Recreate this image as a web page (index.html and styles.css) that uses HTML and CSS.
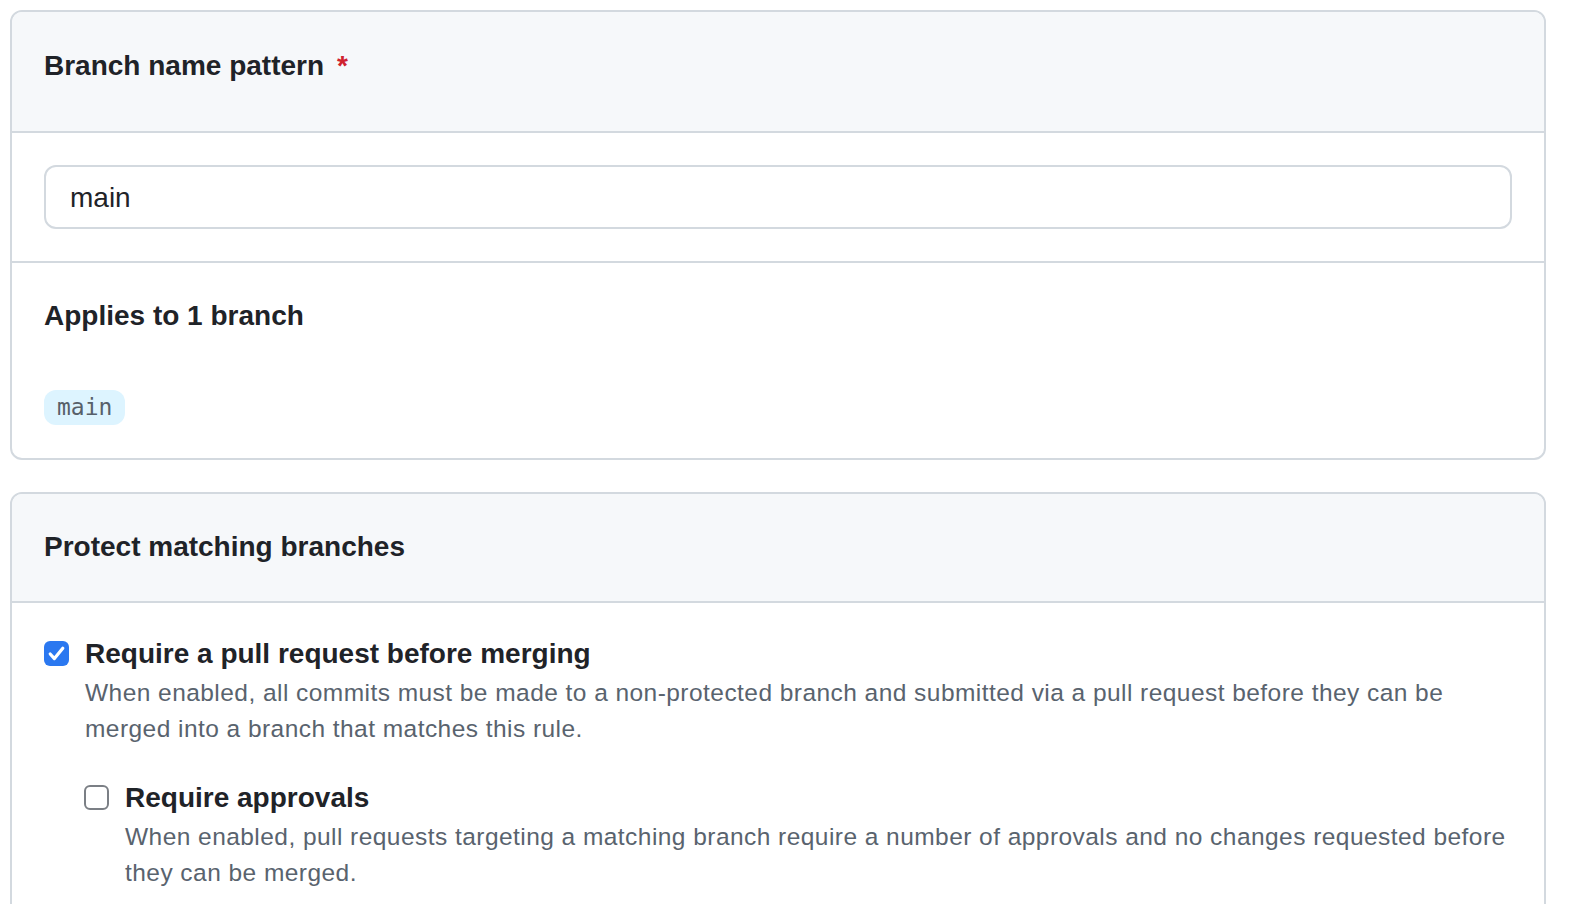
FILE: index.html
```html
<!DOCTYPE html>
<html lang="en">
<head>
<meta charset="utf-8">
<title>Branch protection rule</title>
<link rel="stylesheet" href="styles.css">
</head>
<body>
  <section class="card">
    <div class="card-header card-header--tall">
      <h3 class="heading">Branch name pattern<span class="required">*</span></h3>
    </div>
    <div class="card-row card-row--input">
      <input class="text-input" type="text" value="main" aria-label="Branch name pattern">
    </div>
    <div class="card-row card-row--applies">
      <h3 class="heading">Applies to 1 branch</h3>
      <div class="branch-list">
        <span class="branch-badge">main</span>
      </div>
    </div>
  </section>

  <section class="card card--second">
    <div class="card-header card-header--second">
      <h3 class="heading">Protect matching branches</h3>
    </div>
    <div class="card-row card-row--options">
      <div class="option">
        <span class="checkbox checkbox--checked" role="checkbox" aria-checked="true">
          <svg viewBox="0 0 25 25" width="25" height="25" aria-hidden="true"><polyline points="6.2,13 10.4,17.6 18.8,7.2" fill="none" stroke="#ffffff" stroke-width="3.2" stroke-linecap="round" stroke-linejoin="round"/></svg>
        </span>
        <div class="option-body">
          <div class="option-title">Require a pull request before merging</div>
          <p class="option-note">When enabled, all commits must be made to a non-protected branch and submitted via a pull request before they can be merged into a branch that matches this rule.</p>
          <div class="option option--nested">
            <span class="checkbox" role="checkbox" aria-checked="false"></span>
            <div class="option-body">
              <div class="option-title">Require approvals</div>
              <p class="option-note">When enabled, pull requests targeting a matching branch require a number of approvals and no changes requested before they can be merged.</p>
            </div>
          </div>
        </div>
      </div>
    </div>
  </section>
</body>
</html>
```

FILE: styles.css
```css
* {
  box-sizing: border-box;
}

html, body {
  margin: 0;
  background: #ffffff;
}

body {
  padding: 10px 0 0 10px;
  font-family: "Liberation Sans", Arial, sans-serif;
  color: #1f2328;
  overflow: hidden;
}

.card {
  width: 1536px;
  border: 2px solid #d3d9df;
  border-radius: 12px;
  overflow: hidden;
  background: #ffffff;
}

.card--second {
  margin-top: 32px;
}

.card-header {
  background: #f6f8fa;
  padding: 33px 32px 31px;
  border-bottom: 2px solid #d3d9df;
}

.card-header--tall {
  padding-bottom: 44px;
}

.card-header--second {
  padding-top: 32px;
  padding-bottom: 33px;
}

.heading {
  margin: 0;
  font-size: 28px;
  line-height: 42px;
  font-weight: 700;
  color: #1f2328;
}

.required {
  color: #cf222e;
  margin-left: 13px;
}

.card-row {
  padding: 32px;
}

.card-row--input {
  border-bottom: 2px solid #d3d9df;
}

.text-input {
  display: block;
  width: 100%;
  height: 64px;
  padding: 2px 24px 0;
  border: 2px solid #d3d9df;
  border-radius: 12px;
  font-family: "Liberation Sans", Arial, sans-serif;
  font-size: 28px;
  color: #1f2328;
  background: #ffffff;
  outline: none;
}

.card-row--applies {
  padding-top: 32px;
  padding-bottom: 33px;
}

.branch-list {
  margin-top: 53px;
  display: flex;
}

.branch-badge {
  display: inline-block;
  height: 35px;
  line-height: 35px;
  padding: 0 13px;
  border-radius: 12px;
  background: #ddf4ff;
  color: #57606a;
  font-family: "DejaVu Sans Mono", "Liberation Mono", monospace;
  font-size: 23px;
}

.card-row--options {
  padding-top: 30px;
}

.option {
  display: grid;
  grid-template-columns: 25px 1fr;
  column-gap: 16px;
  align-items: start;
}

.option--nested {
  margin-top: 30px;
  margin-left: -1px;
}

.checkbox {
  width: 25px;
  height: 25px;
  margin-top: 8px;
  border-radius: 6px;
  border: 2px solid #7b7f85;
  background: #ffffff;
  display: block;
}

.checkbox svg {
  display: block;
}

.checkbox--checked {
  border: none;
  background: #2b78f0;
}

.option-body {
  min-width: 0;
}

.option-title {
  font-size: 28px;
  line-height: 42px;
  font-weight: 700;
  color: #1f2328;
}

.option-note {
  margin: 0;
  font-size: 24.5px;
  line-height: 36px;
  letter-spacing: 0.45px;
  color: #59636e;
}
```
